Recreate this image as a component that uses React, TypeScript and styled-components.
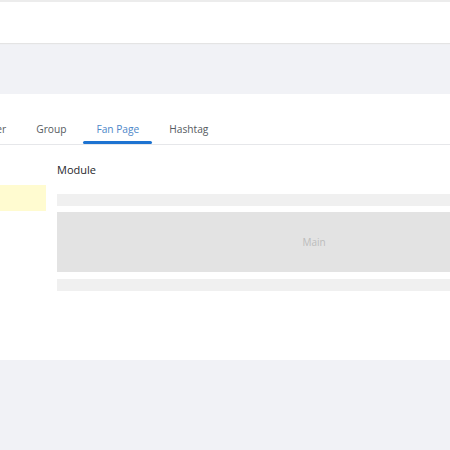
import React from 'react'
import styled, { createGlobalStyle } from 'styled-components'

const GlobalStyle = createGlobalStyle`
  html, body {
    margin: 0;
    padding: 0;
    background: #f1f2f6;
    overflow: hidden;
  }
  body {
    font-family: 'Open Sans', 'Noto Sans', sans-serif;
  }
`

const Page = styled.div`
  width: 450px;
  height: 450px;
  overflow: hidden;
  background: #f1f2f6;
  border-top: 2px solid #ececec;
`

const Header = styled.header`
  height: 40px;
  background: #ffffff;
  border-top: 1px solid #ffffff;
  box-shadow: 0 1px 1px #e4e4e4;
`

const Panel = styled.section`
  margin-top: 51px;
  height: 266px;
  background: #ffffff;
  padding-top: 16px;
  box-sizing: border-box;
`

const TabBar = styled.nav`
  display: flex;
  gap: 4px;
  width: 700px;
  margin-left: -40px;
  border-bottom: 1px solid #e6e7ea;
  height: 35px;
  box-sizing: border-box;
`

type TabProps = {
  active?: boolean
}

const Tab = styled.div<TabProps>`
  position: relative;
  flex-shrink: 0;
  padding: 3px 13px 0;
  display: flex;
  align-items: center;
  height: 34px;
  box-sizing: border-box;
  font-size: 10.2px;
  color: ${(props) => (props.active ? '#4d87c9' : '#555a60')};

  &::after {
    content: '';
    display: ${(props) => (props.active ? 'block' : 'none')};
    position: absolute;
    left: 0;
    right: 0;
    bottom: 0;
    height: 3px;
    border-radius: 2px;
    background: #1d73d1;
  }
`

const Body = styled.div`
  display: flex;
  gap: 11px;
  margin-left: -74px;
  padding-top: 16px;
`

const Sidebar = styled.aside`
  flex-shrink: 0;
  width: 120px;
  padding-top: 24px;
`

const Highlight = styled.div`
  height: 26px;
  background: #fffbd0;
`

const Content = styled.div`
  flex-shrink: 0;
  width: 514px;
  display: flex;
  flex-direction: column;
`

const Title = styled.h3`
  margin: 0 0 15px;
  font-size: 11px;
  line-height: 18px;
  font-weight: 500;
  color: #26282b;
`

const Bar = styled.div`
  height: 12px;
  background: #f0f0f0;
`

const Main = styled.div`
  height: 60px;
  margin: 6px 0 7px;
  background: #e3e3e3;
  display: flex;
  align-items: center;
  justify-content: center;
  font-size: 10px;
  color: #bcbcbc;
`

const tabs = ['Twitter', 'Group', 'Fan Page', 'Hashtag']

const App = () => {
  return (
    <>
      <GlobalStyle />
      <Page>
        <Header />
        <Panel>
          <TabBar>
            {tabs.map((t) => (
              <Tab key={t} active={t === 'Fan Page'}>
                {t}
              </Tab>
            ))}
          </TabBar>
          <Body>
            <Sidebar>
              <Highlight />
            </Sidebar>
            <Content>
              <Title>Module</Title>
              <Bar />
              <Main>Main</Main>
              <Bar />
            </Content>
          </Body>
        </Panel>
      </Page>
    </>
  )
}

export default App
